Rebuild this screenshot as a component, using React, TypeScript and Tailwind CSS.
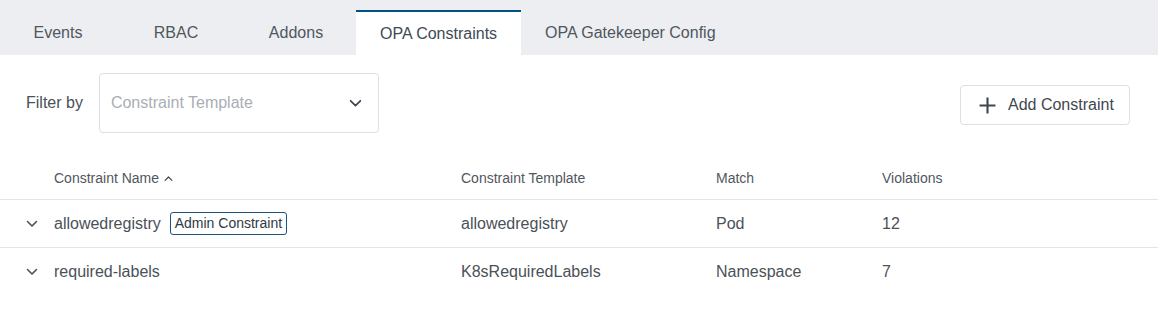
import * as React from "react"

const tabs = [
  { title: "Events", className: "w-[116px]" },
  { title: "RBAC", className: "w-[120px]" },
  { title: "Addons", className: "w-[120px]" },
  { title: "OPA Constraints", className: "px-6", active: true },
  { title: "OPA Gatekeeper Config", className: "px-6" },
]

const rows = [
  { name: "allowedregistry", admin: true, template: "allowedregistry", match: "Pod", violations: "12" },
  { name: "required-labels", admin: false, template: "K8sRequiredLabels", match: "Namespace", violations: "7" },
]

function Chevron({ className = "", up = false }: { className?: string; up?: boolean }) {
  return (
    <svg viewBox="0 0 12 8" className={className} fill="none" stroke="currentColor" strokeWidth="1.6" strokeLinecap="round" strokeLinejoin="round">
      {up ? <path d="M1.5 6.5 6 2l4.5 4.5" /> : <path d="M1.5 1.5 6 6l4.5-4.5" />}
    </svg>
  )
}

export default function App() {
  return (
    <div className="w-[1158px] h-[323px] bg-white text-[#4a5158] font-['Liberation_Sans',Arial,sans-serif] overflow-hidden">
      <div className="h-[55px] bg-[#eceef1] flex items-end">
        {tabs.map((tab) => (
          <div
            key={tab.title}
            className={`h-[45px] flex items-center justify-center text-[16px] ${tab.className} ${
              tab.active ? "bg-white border-t-2 border-[#00527f] text-[#3e4a56]" : "text-[#50575e]"
            }`}
          >
            {tab.title}
          </div>
        ))}
      </div>

      <div className="flex items-center justify-between pt-[18px] pl-[26px] pr-[28px]">
        <div className="flex items-center">
          <span className="text-[16px] text-[#4a5158] mr-[16px]">Filter by</span>
          <div className="w-[280px] h-[60px] border border-[#dcdfe3] rounded-[4px] flex items-center justify-between pl-[11px] pr-[16px]">
            <span className="text-[16px] text-[#a9aeb4]">Constraint Template</span>
            <Chevron className="w-[13px] h-[9px] text-[#3f4750]" />
          </div>
        </div>
        <button className="mt-[4px] h-[40px] w-[170px] border border-[#dcdfe3] rounded-[4px] flex items-center pl-[18px] text-[16px] text-[#3f4750]">
          <svg viewBox="0 0 16 16" className="w-[17px] h-[17px] mr-[12px]" fill="none" stroke="currentColor" strokeWidth="2">
            <path d="M8 0.5v15M0.5 8h15" />
          </svg>
          Add Constraint
        </button>
      </div>

      <div className="mt-[25px] grid grid-cols-[54px_407px_255px_166px_1fr] h-[42px] items-center border-b border-[#e2e4e7] text-[14px] text-[#50575e]">
        <div />
        <div className="flex items-center">
          Constraint Name
          <Chevron up className="w-[9px] h-[7px] ml-[5px] text-[#3f4750]" />
        </div>
        <div>Constraint Template</div>
        <div>Match</div>
        <div>Violations</div>
      </div>

      {rows.map((row, i) => (
        <div
          key={row.name}
          className={`grid grid-cols-[54px_407px_255px_166px_1fr] h-[48px] items-center text-[16px] text-[#4a5158] ${
            i < rows.length - 1 ? "border-b border-[#e2e4e7]" : ""
          }`}
        >
          <div className="pl-[26px] flex items-center">
            <Chevron className="w-[12px] h-[8px] text-[#4a5158]" />
          </div>
          <div className="flex items-center">
            {row.name}
            {row.admin && (
              <span className="ml-[9px] h-[23px] px-[4px] flex items-center border border-[#1a5580] rounded-[3px] text-[14px] text-[#2f3a44]">
                Admin Constraint
              </span>
            )}
          </div>
          <div>{row.template}</div>
          <div>{row.match}</div>
          <div>{row.violations}</div>
        </div>
      ))}
    </div>
  )
}
